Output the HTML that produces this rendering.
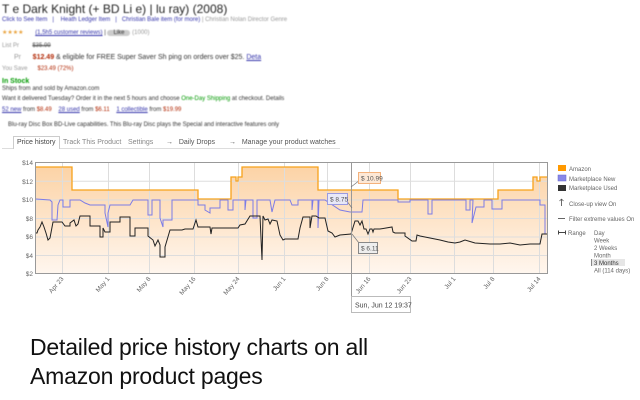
<!DOCTYPE html>
<html><head><meta charset="utf-8"><style>
html,body{margin:0;padding:0;background:#fff;}
body{width:640px;height:400px;position:relative;overflow:hidden;font-family:"Liberation Sans",sans-serif;}
.top{position:absolute;left:0;top:0;width:640px;height:135px;filter:blur(0.6px);}
.t{position:absolute;white-space:nowrap;font-size:7px;color:#333;}
.big{position:absolute;left:30px;font-size:23px;color:#111;white-space:nowrap;letter-spacing:-0.2px;}
</style></head><body>
<div class="top">
<div class="t" style="left:2px;top:2px;font-size:12px;color:#222;">T e Dark Knight (+ BD Li e) | lu ray) (2008)</div>
<div class="t" style="left:2px;top:17px;color:#33a;font-size:6px;">Click to See Item &nbsp; | &nbsp;&nbsp; Heath Ledger Item &nbsp; | &nbsp; Christian Bale item (for more) <span style="color:#999">| Christian Nolan Director Genre</span></div>
<div class="t" style="left:2px;top:29px;font-size:6px;"><span style="color:#e9a23b">★★★★</span>&nbsp;&nbsp;&nbsp;&nbsp;&nbsp;&nbsp;&nbsp;<span style="color:#33a;text-decoration:underline">(1,5h5 customer reviews)</span> | <span style="background:#ccc;border-radius:3px;padding:0 6px;">Like</span> <span style="color:#999">(1000)</span></div>
<div class="t" style="left:2px;top:43px;font-size:6px;color:#999;">List Pr &nbsp;&nbsp;&nbsp;&nbsp;&nbsp;&nbsp; <span style="color:#555;text-decoration:line-through">$35.99</span></div>
<div class="t" style="left:14px;top:54px;font-size:7px;color:#999;">Pr &nbsp;&nbsp;&nbsp;&nbsp; <b style="color:#b12704">$12.49</b> <span style="color:#333">& eligible for FREE Super Saver Sh ping on orders over $25. <span style="color:#33a;text-decoration:underline">Deta</span></span></div>
<div class="t" style="left:2px;top:66px;font-size:6px;color:#999;">You Save &nbsp;&nbsp;&nbsp;&nbsp; <span style="color:#b12704">$23.49 (72%)</span></div>
<div class="t" style="left:2px;top:78px;font-size:7px;color:#090;font-weight:bold;">In Stock</div>
<div class="t" style="left:2px;top:86px;font-size:6px;">Ships from and sold by Amazon.com</div>
<div class="t" style="left:2px;top:96px;font-size:6px;">Want it delivered Tuesday? Order it in the next 5 hours and choose <span style="color:#090">One-Day Shipping</span> at checkout. Details</div>
<div class="t" style="left:2px;top:107px;font-size:6px;"><span style="color:#33a;text-decoration:underline">52 new</span> from <span style="color:#b12704">$8.49</span> &nbsp;&nbsp; <span style="color:#33a;text-decoration:underline">28 used</span> from <span style="color:#b12704">$6.11</span> &nbsp;&nbsp; <span style="color:#33a;text-decoration:underline">1 collectible</span> from <span style="color:#b12704">$19.99</span></div>
<div class="t" style="left:8px;top:122px;font-size:6px;">Blu-ray Disc Box BD-Live capabilities. This Blu-ray Disc plays the Special and interactive features only</div>
</div>
<div style="position:absolute;left:2px;top:148px;width:338px;height:1px;background:#ddd"></div>
<div style="position:absolute;left:13px;top:136px;width:45px;height:12px;border:1px solid #ccc;border-bottom:none;background:#fff"></div>
<div class="t" style="left:17px;top:139px;font-size:7px;color:#444;">Price history</div>
<div class="t" style="left:63px;top:139px;font-size:7px;color:#888;">Track This Product</div>
<div class="t" style="left:128px;top:139px;font-size:7px;color:#888;">Settings</div>
<div class="t" style="left:166px;top:139px;font-size:7px;color:#555;">→ &nbsp;&nbsp;Daily Drops</div>
<div class="t" style="left:229px;top:139px;font-size:7px;color:#555;">→ &nbsp;&nbsp;Manage your product watches</div>
<svg width="640" height="400" style="position:absolute;left:0;top:0" font-family="Liberation Sans, sans-serif">
<defs><linearGradient id="g" x1="0" y1="0" x2="0" y2="1"><stop offset="0" stop-color="#fcd3a6"/><stop offset="1" stop-color="#fff6ee"/></linearGradient></defs>
<rect x="35.5" y="162.5" width="512" height="111" fill="#fff" stroke="#999" stroke-width="1"/>
<polygon fill="url(#g)" points="36,273 36,167 72,167 72,190 198,190 198,199 231,199 231,177 236,177 236,181 238,181 238,177 242,177 242,167 318,167 318,190 398,190 398,199 498,199 498,190 533,190 533,177 537,177 537,181 540,181 540,177 547,177 547,273"/>
<g stroke="#ddd" stroke-width="1">
<line x1="36" y1="181.3" x2="547" y2="181.3"/><line x1="36" y1="200" x2="547" y2="200"/><line x1="36" y1="218.5" x2="547" y2="218.5"/><line x1="36" y1="237" x2="547" y2="237"/><line x1="36" y1="255.5" x2="547" y2="255.5"/>
<line x1="62.5" y1="163" x2="62.5" y2="273"/><line x1="108.5" y1="163" x2="108.5" y2="273"/><line x1="149.5" y1="163" x2="149.5" y2="273"/><line x1="194.5" y1="163" x2="194.5" y2="273"/><line x1="238.5" y1="163" x2="238.5" y2="273"/><line x1="284.5" y1="163" x2="284.5" y2="273"/><line x1="327.5" y1="163" x2="327.5" y2="273"/><line x1="369.5" y1="163" x2="369.5" y2="273"/><line x1="410.5" y1="163" x2="410.5" y2="273"/><line x1="454.5" y1="163" x2="454.5" y2="273"/><line x1="493.5" y1="163" x2="493.5" y2="273"/><line x1="539.5" y1="163" x2="539.5" y2="273"/>
</g>
<polyline fill="none" stroke="#f7a21b" stroke-width="1.3" points="36,167 72,167 72,190 198,190 198,199 231,199 231,177 236,177 236,181 238,181 238,177 242,177 242,167 318,167 318,190 398,190 398,199 498,199 498,190 533,190 533,177 537,177 537,181 540,181 540,177 547,177"/>
<polyline fill="none" stroke="#7c7ce6" stroke-width="1" points="36,199 50,200 52,202 52,220 57,220 58,205 60,200 63,200 63,207 70,207 70,200 80,200 85,203 90,205 105,205 105,213 108,227 108,213 110,205 130,205 133,200 148,200 148,215 152,215 152,200 160,200 160,218 163,227 163,220 172,220 172,200 198,200 198,205 205,205 205,210 210,213 210,208 220,208 220,200 228,200 228,210 233,210 233,200 245,200 245,210 246,200 253,200 253,218 257,218 257,200 270,200 272,212 275,200 290,200 292,205 298,205 298,200 312,200 312,210 313,200 318,200 318,228 319,200 325,200 340,210 350,212 362,212 363,200 398,200 398,202 410,202 410,200 428,200 428,214 432,214 432,200 466,200 466,210 470,210 470,200 473,200 472,223 476,207 484,207 484,200 492,200 492,209 502,209 502,200 540,200 540,205 545,205 545,234"/>
<polyline fill="none" stroke="#222" stroke-width="1" points="36,233 37,233 38,230 40,227 42,222 44,227 46,233 48,240 50,238 53,222 62,222 65,226 70,226 70,223 74,220 76,226 78,224 80,216 90,216 90,226 100,226 100,237 103,237 103,228 105,232 110,232 110,222 120,222 120,217 130,217 130,236 135,236 135,228 148,228 148,236 153,240 155,246 158,240 160,245 160,257 165,257 165,247 170,230 182,230 185,229 193,229 196,220 198,227 210,227 211,234 212,228 238,228 240,225 245,224 250,216 260,216 262,260 263,216 265,220 268,219 270,224 272,220 277,221 280,235 283,240 285,239 298,239 300,228 303,217 310,217 310,228 312,216 316,216 319,218 325,218 328,231 332,233 335,237 340,235 351,234 355,221 358,221 360,225 362,221 364,229 366,229 368,234 370,229 372,229 373,232 374,229 380,229 392,227 393,232 395,233 405,233 405,236 412,241 416,241 417,235 420,236 430,238 440,240 448,242 455,243 460,242 465,240 475,243 490,244 500,244 510,243 520,245 530,244 540,244 542,234 547,234"/>
<line x1="351.5" y1="163" x2="351.5" y2="312" stroke="#999"/>
<line x1="351" y1="187" x2="360" y2="180" stroke="#777" stroke-width="0.7"/>
<line x1="346" y1="200" x2="352" y2="208" stroke="#777" stroke-width="0.7"/>
<line x1="352" y1="234" x2="359" y2="243" stroke="#777" stroke-width="0.7"/>
<rect x="358.5" y="172.5" width="22" height="11" fill="#fde8d6" stroke="#f4b27c"/><text x="361" y="180.5" font-size="6.5" fill="#555">$ 10.99</text>
<rect x="327.5" y="193.5" width="20" height="11" fill="#e8e8f8" stroke="#9a9ae0"/><text x="330" y="201.5" font-size="6.5" fill="#555">$ 8.75</text>
<rect x="358.5" y="242.5" width="19" height="11" fill="#eee" stroke="#888"/><text x="361" y="250.5" font-size="6.5" fill="#555">$ 6.11</text>
<rect x="351.5" y="296.5" width="59" height="16" fill="#fff" stroke="#bbb"/><text x="355" y="307.5" font-size="7" fill="#444">Sun, Jun 12 19:37</text>
<g font-size="6.5" fill="#666" text-anchor="end">
<text x="33" y="165">$14</text><text x="33" y="184">$12</text><text x="33" y="202">$10</text><text x="33" y="221">$8</text><text x="33" y="239">$6</text><text x="33" y="258">$4</text><text x="33" y="276">$2</text>
</g>
<g font-size="6.5" fill="#666" text-anchor="end">
<text transform="translate(64,279) rotate(-50)">Apr 23</text>
<text transform="translate(110,279) rotate(-50)">May 1</text>
<text transform="translate(151,279) rotate(-50)">May 8</text>
<text transform="translate(196,279) rotate(-50)">May 16</text>
<text transform="translate(240,279) rotate(-50)">May 24</text>
<text transform="translate(286,279) rotate(-50)">Jun 1</text>
<text transform="translate(329,279) rotate(-50)">Jun 8</text>
<text transform="translate(371,279) rotate(-50)">Jun 16</text>
<text transform="translate(412,279) rotate(-50)">Jun 23</text>
<text transform="translate(456,279) rotate(-50)">Jul 1</text>
<text transform="translate(495,279) rotate(-50)">Jul 8</text>
<text transform="translate(541,279) rotate(-50)">Jul 14</text>
</g>
<rect x="558" y="165" width="8" height="6" fill="#f90"/>
<rect x="558" y="175" width="8" height="6" fill="#8888e8" stroke="#66c" stroke-width="0.5"/>
<rect x="558" y="185" width="8" height="6" fill="#333"/>
<g font-size="6" fill="#666">
<text x="569" y="171">Amazon</text><text x="569" y="181">Marketplace New</text><text x="569" y="190">Marketplace Used</text>
<text x="569" y="206">Close-up view On</text><text x="569" y="221">Filter extreme values On</text>
<text x="568" y="235">Range</text>
<text x="594" y="235">Day</text><text x="594" y="242.5">Week</text><text x="594" y="250">2 Weeks</text><text x="594" y="257.5">Month</text>
</g>
<rect x="591" y="259" width="34" height="7" fill="#e6e6e6"/><line x1="591.5" y1="259" x2="591.5" y2="266" stroke="#888"/>
<text x="594" y="265" font-size="6" fill="#333">3 Months</text>
<text x="594" y="272.5" font-size="6" fill="#666">All (114 days)</text>
<line x1="561.5" y1="199" x2="561.5" y2="206" stroke="#444" stroke-width="0.8"/><path d="M559.5,201 L561.5,199 L563.5,201" fill="none" stroke="#444" stroke-width="0.6"/>
<line x1="558" y1="218.5" x2="565" y2="218.5" stroke="#666"/>
<line x1="558" y1="232.5" x2="566" y2="232.5" stroke="#444"/><line x1="558.5" y1="230.5" x2="558.5" y2="234.5" stroke="#444"/><line x1="565.5" y1="230.5" x2="565.5" y2="234.5" stroke="#444"/>
</svg>
<div class="big" style="top:334px;">Detailed price history charts on all</div>
<div class="big" style="top:363px;">Amazon product pages</div>
</body></html>
